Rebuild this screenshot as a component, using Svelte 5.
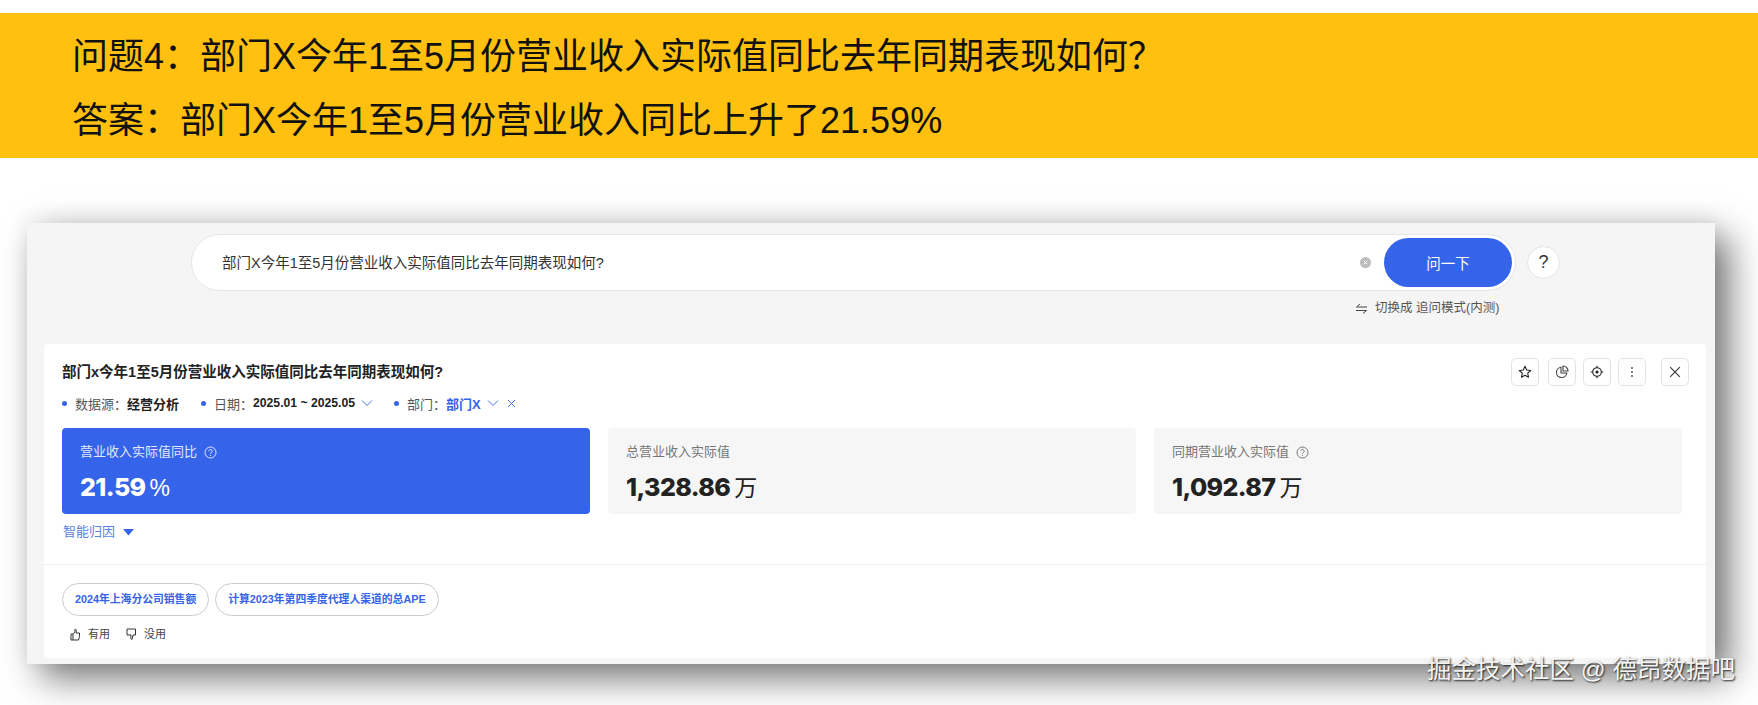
<script lang="ts">
  const question = "今年1至5月份营业收入实际值同比去年同期表现如何";
  const metrics = [
    { label: "营业收入实际值同比", value: "21.59", unit: "%", help: true, primary: true },
    { label: "总营业收入实际值", value: "1,328.86", unit: "万", help: false, primary: false },
    { label: "同期营业收入实际值", value: "1,092.87", unit: "万", help: true, primary: false },
  ];
  const chips = ["2024年上海分公司销售额", "计算2023年第四季度代理人渠道的总APE"];
</script>

<div class="page">
  <div class="banner">
    <div>问题4：部门X{question}？</div>
    <div>答案：部门X今年1至5月份营业收入同比上升了21.59%</div>
  </div>

  <div class="panel">
    <div class="search-row">
      <div class="search">
        <span class="search-text">部门X{question}?</span>
        <span class="clear">
          <svg width="11" height="11" viewBox="0 0 11 11">
            <circle cx="5.5" cy="5.5" r="5.5" fill="#bdbdbd" />
            <path d="M3.8 3.8l3.4 3.4M7.2 3.8l-3.4 3.4" stroke="#fff" stroke-width="1" />
          </svg>
        </span>
        <button class="ask">问一下</button>
      </div>
      <div class="help-btn">?</div>
    </div>
    <div class="switch">
      <svg width="13" height="11" viewBox="0 0 13 11" fill="none" stroke="#444" stroke-width="1">
        <path d="M12 4H1.500L5 1M1 7.500h10.500L8 10.500" />
      </svg>
      <span>切换成 追问模式(内测)</span>
    </div>

    <div class="card">
      <div class="head">
        <div class="title">部门x{question}?</div>
        <div class="tools">
          <span class="tool star">
            <svg width="14" height="14" viewBox="0 0 14 14" fill="none" stroke="#222" stroke-width="1.100">
              <path d="M7 1.300l1.700 3.700 4 .5-3 2.700.8 4L7 10.200l-3.500 2 .8-4-3-2.700 4-.5z" stroke-linejoin="round" />
            </svg>
          </span>
          <span class="tool">
            <svg width="14" height="14" viewBox="0 0 14 14" fill="none" stroke="#444" stroke-width="1.100">
              <path d="M6 2.200a5.200 5.200 0 1 0 5.800 5.800H6z" />
              <path d="M8 1a5 5 0 0 1 5 5H8z" />
            </svg>
          </span>
          <span class="tool">
            <svg width="14" height="14" viewBox="0 0 14 14" fill="none" stroke="#222" stroke-width="1.100">
              <circle cx="7" cy="7" r="4.300" />
              <circle cx="7" cy="7" r="1.600" fill="#222" stroke="none" />
              <path d="M7 .8v2M7 11.200v2M.8 7h2M11.200 7h2" />
            </svg>
          </span>
          <span class="tool">
            <svg width="14" height="14" viewBox="0 0 14 14" fill="#444">
              <circle cx="7" cy="3" r="0.900" /><circle cx="7" cy="7" r="0.900" /><circle cx="7" cy="11" r="0.900" />
            </svg>
          </span>
          <span class="tool close">
            <svg width="14" height="14" viewBox="0 0 14 14" fill="none" stroke="#333" stroke-width="1.100">
              <path d="M2.200 2.200l9.600 9.600M11.800 2.200l-9.600 9.600" />
            </svg>
          </span>
        </div>
      </div>

      <div class="filters">
        <span class="filter first">
          <i></i><span class="key">数据源：</span><b>经营分析</b>
        </span>
        <span class="filter second">
          <i></i><span class="key">日期：</span><b class="date">2025.01 ~ 2025.05</b>
          <svg class="chev" width="12" height="8" viewBox="0 0 12 8" fill="none" stroke="#4a6fe0" stroke-width="1">
            <path d="M1 1.500l5 5 5-5" />
          </svg>
        </span>
        <span class="filter">
          <i></i><span class="key">部门：</span><b class="blue">部门X</b>
          <svg class="chev" width="12" height="8" viewBox="0 0 12 8" fill="none" stroke="#4a6fe0" stroke-width="1">
            <path d="M1 1.500l5 5 5-5" />
          </svg>
          <svg class="cross" width="9" height="9" viewBox="0 0 9 9" fill="none" stroke="#4a6fe0" stroke-width="1">
            <path d="M1 1l7 7M8 1l-7 7" />
          </svg>
        </span>
      </div>

      <div class="metrics">
        {#each metrics as m}
          <div class="metric" class:primary={m.primary}>
            <div class="label">
              {m.label}
              {#if m.help}
                <svg width="13" height="13" viewBox="0 0 13 13" fill="none" stroke="currentColor" stroke-width="1">
                  <circle cx="6.500" cy="6.500" r="5.500" />
                  <path d="M4.800 5.200a1.700 1.700 0 1 1 2.600 1.400c-.6.400-.9.600-.9 1.300" />
                  <path d="M6.500 9v1" />
                </svg>
              {/if}
            </div>
            <div class="value">{m.value}<span class="unit">{m.unit}</span></div>
          </div>
        {/each}
      </div>

      <div class="attr">
        智能归因
        <svg width="11" height="7" viewBox="0 0 11 7"><path d="M0 0h11L5.500 6.500z" fill="#3563e9" /></svg>
      </div>

      <div class="footer">
        <div class="chips">
          {#each chips as c}
            <span class="chip">{c}</span>
          {/each}
        </div>
        <div class="feedback">
          <svg width="13" height="13" viewBox="0 0 13 13" fill="none" stroke="#333" stroke-width="1">
            <path d="M2 6h2v6H2zM4 6.200L6 4V1.200c1.200 0 1.600 1 1.400 2.100L7 5h3.500v3.500L9.500 12H4" />
          </svg>
          <span class="fb-text">有用</span>
          <svg class="down" width="13" height="13" viewBox="0 0 13 13" fill="none" stroke="#333" stroke-width="1">
            <path d="M2 1h8.500v6H8L7 11.500c-1 0-1.400-1-1.200-2L6 7H2z" />
          </svg>
          <span class="fb-text">没用</span>
        </div>
      </div>
    </div>
  </div>

  <div class="watermark">掘金技术社区 @ 德昂数据吧</div>
</div>

<style>
  :global(body) {
    background: #fff;
    overflow: hidden;
  }

  .page {
    position: relative;
    height: 705px;
    overflow: hidden;
    padding-top: 13px;
    box-sizing: border-box;
    font-family: "Liberation Sans", "Noto Sans CJK SC", sans-serif;
  }

  .banner {
    height: 145px;
    background: #ffc010;
    padding: 12px 0 0 72px;
    box-sizing: border-box;
    font-size: 36px;
    line-height: 64px;
    color: #111;
  }

  .panel {
    margin: 65px 43px 0 27px;
    height: 441px;
    background: #f5f5f5;
    box-shadow: 14px 14px 34px rgba(0, 0, 0, 0.55), 0 -6px 20px rgba(0, 0, 0, 0.06);
    padding: 11px 9px 6px 17px;
    box-sizing: border-box;
    display: flex;
    flex-direction: column;
  }

  .search-row {
    display: flex;
    align-items: center;
    margin-left: 147px;
    gap: 11px;
  }

  .search {
    width: 1325px;
    height: 57px;
    box-sizing: border-box;
    background: #fff;
    border: 1px solid #e6e6e6;
    border-radius: 29px;
    display: flex;
    align-items: center;
    padding: 0 3px 0 30px;
  }

  .search-text {
    flex: 1;
    font-size: 14.500px;
    color: #333;
    margin-top: -3px;
  }

  .clear {
    display: flex;
    margin-right: 13px;
  }

  .ask {
    width: 128px;
    height: 49px;
    border: none;
    border-radius: 25px;
    background: #3563e9;
    color: #fff;
    font: 14.500px "Liberation Sans", "Noto Sans CJK SC", sans-serif;
  }

  .help-btn {
    width: 33px;
    height: 33px;
    box-sizing: border-box;
    border: 1px solid #e4e4e4;
    border-radius: 50%;
    background: #fff;
    color: #333;
    font-size: 18px;
    display: flex;
    align-items: center;
    justify-content: center;
  }

  .switch {
    display: flex;
    align-items: center;
    gap: 7px;
    align-self: flex-start;
    margin: 8px 0 0 1311px;
    font-size: 12.500px;
    line-height: 18px;
    color: #555;
  }

  .card {
    flex: 1;
    margin-top: 27px;
    background: #fff;
    border-radius: 4px;
    display: flex;
    flex-direction: column;
    padding: 14px 0 0 18px;
  }

  .head {
    display: flex;
    align-items: center;
    justify-content: space-between;
    padding-right: 17px;
    height: 28px;
  }

  .title {
    font-size: 14.500px;
    font-weight: 700;
    color: #222;
    margin-top: -4px;
  }

  .tools {
    display: flex;
    gap: 7px;
  }

  .tool {
    width: 28px;
    height: 28px;
    box-sizing: border-box;
    border: 1px solid #e3e3e3;
    border-radius: 5px;
    display: flex;
    align-items: center;
    justify-content: center;
  }

  .tool.star {
    margin-right: 2px;
  }

  .tool.close {
    margin-left: 8px;
  }

  .filters {
    display: flex;
    align-items: center;
    height: 18px;
    margin-top: 8px;
    font-size: 13px;
    color: #555;
  }

  .filter {
    display: flex;
    align-items: center;
  }

  .filter.first {
    width: 139px;
  }

  .filter.second {
    width: 193px;
  }

  .filter i {
    width: 5px;
    height: 5px;
    border-radius: 50%;
    background: #3563e9;
    margin-right: 8px;
  }

  .filter b {
    color: #222;
  }

  .filter b.date {
    font-size: 12.200px;
  }

  .filter b.blue {
    color: #3563e9;
  }

  .chev {
    margin-left: 6px;
  }

  .cross {
    margin-left: 8px;
  }

  .metrics {
    display: grid;
    grid-template-columns: repeat(3, 528px);
    gap: 18px;
    margin-top: 16px;
  }

  .metric {
    height: 86px;
    background: #f6f6f6;
    border-radius: 4px;
    padding: 15px 18px 0;
    box-sizing: border-box;
    color: #222;
  }

  .metric.primary {
    background: #3563e9;
    color: #fff;
  }

  .label {
    display: flex;
    align-items: center;
    gap: 7px;
    font-size: 13px;
    line-height: 18px;
    color: #777;
  }

  .primary .label {
    color: #e3e9fc;
  }

  .value {
    margin-top: 11px;
    font-family: Inter, "Liberation Sans", sans-serif;
    font-size: 25px;
    font-weight: 800;
    line-height: 30px;
    letter-spacing: -0.6px;
  }

  .unit {
    margin-left: 4px;
    font-family: "Liberation Sans", "Noto Sans CJK SC", sans-serif;
    font-size: 23px;
    font-weight: 400;
  }

  .attr {
    display: flex;
    align-items: center;
    gap: 8px;
    margin: 9px 0 0 1px;
    font-size: 13px;
    line-height: 18px;
    color: #5a7fe6;
  }

  .footer {
    margin: 23px 0 0 -18px;
    padding: 18px 0 0 18px;
    border-top: 1px solid #eee;
  }

  .chips {
    display: flex;
    gap: 6px;
  }

  .chip {
    height: 33px;
    box-sizing: border-box;
    padding: 0 12px;
    border: 1px solid #ccc;
    border-radius: 17px;
    font-size: 10.800px;
    font-weight: 700;
    line-height: 31px;
    color: #3563e9;
  }

  .feedback {
    display: flex;
    align-items: center;
    margin: 10px 0 0 7px;
    font-size: 11px;
    line-height: 16px;
    color: #444;
  }

  .fb-text {
    margin-left: 6px;
  }

  .down {
    margin-left: 15px;
  }

  .watermark {
    position: absolute;
    left: 1427px;
    top: 654px;
    font-size: 24.500px;
    line-height: 32px;
    white-space: nowrap;
    color: #f4f4f4;
    text-shadow: 1px 1px 2px rgba(0, 0, 0, 0.85);
  }
</style>
